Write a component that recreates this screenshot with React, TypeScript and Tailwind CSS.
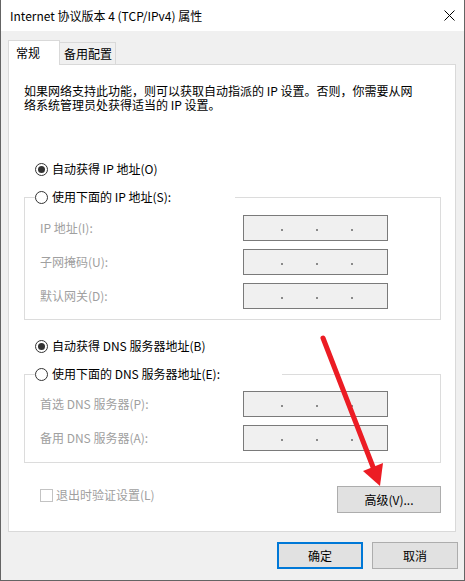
const ui = "[font-family:'Noto_Sans_CJK_SC',sans-serif]"

function Radio({ checked }: { checked?: boolean }) {
  return (
    <span className="w-[13px] h-[13px] rounded-full border border-[#333333] bg-white flex items-center justify-center shrink-0">
      {checked && <span className="w-[7px] h-[7px] rounded-full bg-[#333333]" />}
    </span>
  )
}

function IpBox() {
  return (
    <div className="w-[145px] h-[26px] border border-[#7a7a7a] bg-[#f0f0f0] flex items-center pl-[37px] gap-[33px]">
      <span className="w-[2px] h-[2px] mt-[4px] bg-[#8a8a8a]" />
      <span className="w-[2px] h-[2px] mt-[4px] bg-[#8a8a8a]" />
      <span className="w-[2px] h-[2px] mt-[4px] bg-[#8a8a8a]" />
    </div>
  )
}

function Field({ label }: { label: string }) {
  return (
    <div className="flex items-center h-[26px]">
      <span className="w-[203px] text-[#a0a0a0]">{label}</span>
      <IpBox />
    </div>
  )
}

function Group({ label, width, children, pad }: { label: string; width: string; children: React.ReactNode; pad: string }) {
  return (
    <fieldset className="border border-[#dcdcdc] w-[417px]">
      <legend className={`ml-[10px] ${width} h-[16px] flex items-center gap-[4px]`}>
        <Radio />
        <span>{label}</span>
      </legend>
      <div className={`flex flex-col gap-[8px] pl-[15px] ${pad}`}>{children}</div>
    </fieldset>
  )
}

export default function App() {
  return (
    <div className={`relative w-[465px] h-[581px] flex flex-col border-x border-b border-[#646464] text-[12px] text-black ${ui}`}>
      {/* title bar */}
      <div className="h-[31px] bg-white flex items-center justify-between pl-[9px] pr-[9px]">
        <span>Internet 协议版本 4 (TCP/IPv4) 属性</span>
        <svg width="11" height="11" viewBox="0 0 11 11" stroke="#000" strokeWidth="1">
          <path d="M0.5 0.5L10.5 10.5M10.5 0.5L0.5 10.5" />
        </svg>
      </div>

      <div className="flex-1 bg-[#f0f0f0] px-[7px] pt-[9px]">
        {/* tabs */}
        <div className="flex items-end h-[24px]">
          <div className="relative z-10 -mb-px h-[25px] w-[52px] bg-white border border-b-0 border-[#d9d9d9] flex items-center pl-[7px]">
            常规
          </div>
          <div className="h-[22px] w-[56px] border border-l-0 border-b-0 border-[#d9d9d9] flex items-center pl-[4px]">
            备用配置
          </div>
        </div>

        {/* panel */}
        <div className="w-[448px] h-[468px] bg-white border border-[#d9d9d9] pl-[15px] pr-[14px] pt-[19px]">
          <p className="leading-[14px]">
            如果网络支持此功能，则可以获取自动指派的 IP 设置。否则，你需要从网
            <br />
            络系统管理员处获得适当的 IP 设置。
          </p>

          <div className="mt-[49px] ml-[11px] h-[16px] flex items-center gap-[4px]">
            <Radio checked />
            <span>自动获得 IP 地址(O)</span>
          </div>

          <div className="mt-[12px]">
            <Group label="使用下面的 IP 地址(S):" width="w-[200px]" pad="pt-[10px] pb-[10px]">
              <Field label="IP 地址(I):" />
              <Field label="子网掩码(U):" />
              <Field label="默认网关(D):" />
            </Group>
          </div>

          <div className="mt-[18px] ml-[11px] h-[16px] flex items-center gap-[4px]">
            <Radio checked />
            <span>自动获得 DNS 服务器地址(B)</span>
          </div>

          <div className="mt-[12px]">
            <Group label="使用下面的 DNS 服务器地址(E):" width="w-[247px]" pad="pt-[9px] pb-[11px]">
              <Field label="首选 DNS 服务器(P):" />
              <Field label="备用 DNS 服务器(A):" />
            </Group>
          </div>

          <div className="mt-[23px] flex items-start justify-between">
            <div className="ml-[16px] mt-[1px] h-[16px] flex items-center gap-[3px] text-[#a0a0a0]">
              <span className="w-[13px] h-[13px] border border-[#c3c3c3] bg-white" />
              <span>退出时验证设置(L)</span>
            </div>
            <button className="w-[104px] h-[27px] bg-[#e1e1e1] border border-[#adadad] flex items-center justify-center">
              高级(V)...
            </button>
          </div>
        </div>

        {/* dialog buttons */}
        <div className="mt-[10px] -mr-px flex justify-end gap-[9px]">
          <button className="w-[86px] h-[27px] bg-[#e1e1e1] border-2 border-[#0078d7] flex items-center justify-center">
            确定
          </button>
          <button className="w-[86px] h-[27px] bg-[#e1e1e1] border border-[#adadad] flex items-center justify-center">
            取消
          </button>
        </div>
      </div>

      {/* red annotation arrow */}
      <svg className="absolute left-0 top-0 pointer-events-none" width="465" height="581" viewBox="0 0 465 581">
        <path d="M322 338L372 467" stroke="#ec1c24" strokeWidth="5" strokeLinecap="round" />
        <path d="M379 486L362 471L382 463Z" fill="#ec1c24" />
      </svg>
    </div>
  )
}
